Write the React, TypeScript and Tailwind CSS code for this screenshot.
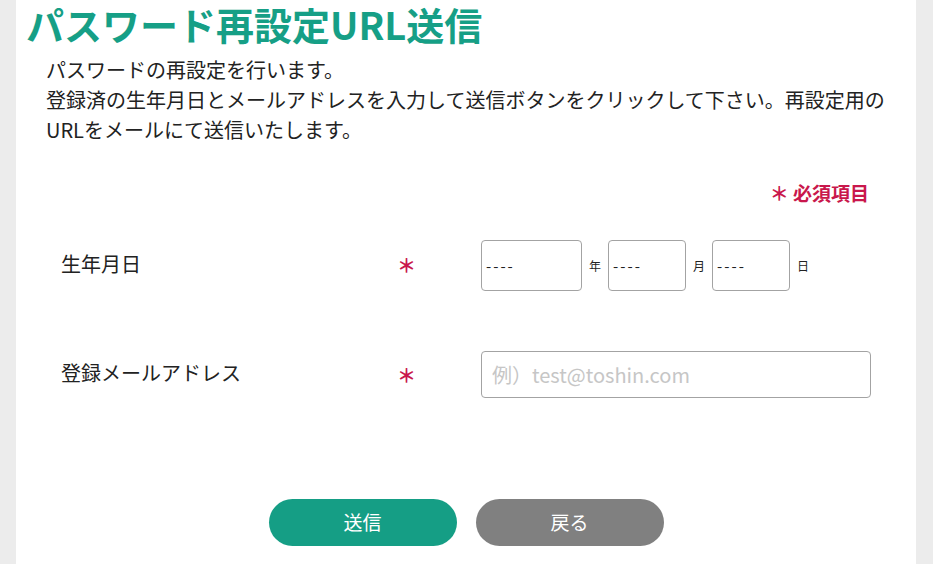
import React from 'react';

const font = { fontFamily: '"Noto Sans CJK JP", "Noto Sans", sans-serif' };

const Required = () => (
  <span className="ml-[-3px] text-[19px] font-bold leading-none text-[#c9174c]">＊</span>
);

const App = () => {
  return (
    <div className="min-h-[564px] w-full bg-[#ececec] pl-[16px]" style={font}>
      <div className="h-[564px] w-[900px] overflow-hidden bg-white">
        {/* Title */}
        <h1 className="pl-[10px] text-[38px] font-bold leading-[48px] text-[#169f86]">
          パスワード再設定URL送信
        </h1>

        {/* Intro */}
        <div className="mt-[7px] pl-[30px] pr-[10px] text-[20px] leading-[30px] text-[#222]">
          <p>パスワードの再設定を行います。</p>
          <p>登録済の生年月日とメールアドレスを入力して送信ボタンをクリックして下さい。再設定用のURLをメールにて送信いたします。</p>
        </div>

        {/* Required note */}
        <div className="mt-[34px] flex justify-end pr-[47px] text-[19px] font-bold leading-[28px] text-[#c9174c]">
          <span>＊ 必須項目</span>
        </div>

        {/* Form */}
        <div className="mt-[33px] grid grid-cols-[339px_81px_1fr] items-center pl-[45px] text-[20px] text-[#222]">
          <div className="pb-[3px]">生年月日</div>
          <div className="pb-[2px]"><Required /></div>
          <div className="flex items-center gap-[7px]">
            <input
              className="h-[51px] w-[101px] rounded-[4px] border border-[#a3a3a3] px-[4px] text-[15px] tracking-[2px] outline-none placeholder:text-[#222]"
              placeholder="----"
            />
            <span className="text-[12px]">年</span>
            <input
              className="h-[51px] w-[78px] rounded-[4px] border border-[#a3a3a3] px-[4px] text-[15px] tracking-[2px] outline-none placeholder:text-[#222]"
              placeholder="----"
            />
            <span className="text-[12px]">月</span>
            <input
              className="h-[51px] w-[78px] rounded-[4px] border border-[#a3a3a3] px-[4px] text-[15px] tracking-[2px] outline-none placeholder:text-[#222]"
              placeholder="----"
            />
            <span className="text-[12px]">日</span>
          </div>

          <div className="mt-[60px] pb-[4px]">登録メールアドレス</div>
          <div className="mt-[60px]"><Required /></div>
          <div className="mt-[60px]">
            <input
              className="h-[47px] w-[390px] rounded-[4px] border border-[#a3a3a3] px-[10px] text-[20px] outline-none placeholder:text-[#c6c6c6]"
              placeholder="例）test@toshin.com"
            />
          </div>
        </div>

        {/* Buttons */}
        <div className="mt-[101px] flex justify-center gap-[19px]">
          <button className="h-[47px] w-[188px] rounded-full bg-[#159e85] text-[19px] text-white">送信</button>
          <button className="h-[47px] w-[188px] rounded-full bg-[#808080] text-[19px] text-white">戻る</button>
        </div>
      </div>
    </div>
  );
};

export default App;
